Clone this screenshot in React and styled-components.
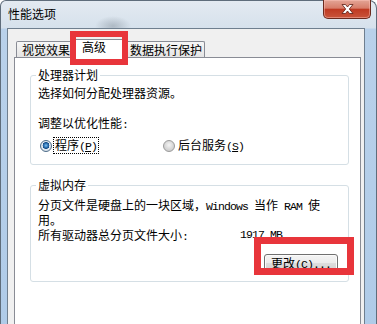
import styled, { createGlobalStyle } from "styled-components"

const GlobalStyle = createGlobalStyle`
    html, body {
        margin: 0;
        padding: 0;
        background: #ffffff;
        overflow: hidden;
    }
    body {
        font-family: "Noto Sans CJK SC", "Noto Sans", sans-serif;
        font-size: 12px;
        color: #000000;
    }
`

export default function App() {
    return (
        <>
            <GlobalStyle />
            <Window>
                <TitleBar>
                    <Title>性能选项</Title>
                    <CloseButton>
                        <svg width="13" height="10" viewBox="0 0 13 10">
                            <path
                                d="M1 0.5 H4.5 L6.5 3 L8.5 0.5 H12 L8.3 5 L12 9.5 H8.5 L6.5 7 L4.5 9.5 H1 L4.7 5 Z"
                                fill="#ffffff"
                                stroke="#5a1c12"
                                strokeWidth="0.8"
                                strokeLinejoin="round"
                            />
                        </svg>
                    </CloseButton>
                </TitleBar>
                <Frame>
                    <Client>
                        <TabRow>
                            <Tab $width={57} $padLeft={5} $first>视觉效果</Tab>
                            <Tab $width={55} $padLeft={10} $active>高级</Tab>
                            <Tab $width={81} $padLeft={5}>数据执行保护</Tab>
                        </TabRow>
                        <Panel>
                            <Group>
                                <Legend>处理器计划</Legend>
                                <GroupBody>
                                    <Line $top={6}>选择如何分配处理器资源。</Line>
                                    <Line $top={18}>调整以优化性能<Latin>:</Latin></Line>
                                    <RadioRow>
                                        <Option>
                                            <Radio $checked />
                                            <OptionText $focused>
                                                程序<Latin>(<u>P</u>)</Latin>
                                            </OptionText>
                                        </Option>
                                        <Option $offset={64}>
                                            <Radio />
                                            <OptionText>
                                                后台服务<Latin>(<u>S</u>)</Latin>
                                            </OptionText>
                                        </Option>
                                    </RadioRow>
                                </GroupBody>
                            </Group>
                            <Group $gap={14} $bottom={10}>
                                <Legend>虚拟内存</Legend>
                                <GroupBody>
                                    <Line $top={7} $height={13}>
                                        分页文件是硬盘上的一块区域，<Latin>Windows </Latin>当作<Latin> RAM </Latin>使
                                    </Line>
                                    <Line $top={0} $height={13}>用。</Line>
                                    <InfoRow>
                                        <InfoLabel>所有驱动器总分页文件大小<Latin>:</Latin></InfoLabel>
                                        <Latin>1917 MB</Latin>
                                    </InfoRow>
                                    <ButtonRow>
                                        <Button>
                                            更改<Latin>(<u>C</u>)...</Latin>
                                        </Button>
                                    </ButtonRow>
                                </GroupBody>
                            </Group>
                        </Panel>
                    </Client>
                </Frame>
                <Mark $left={69} $top={30} $width={58} $height={34} $border={6} />
                <Mark $left={253} $top={236} $width={100} $height={38} $border={7} />
            </Window>
        </>
    )
}

const Window = styled.div`
    position: relative;
    box-sizing: border-box;
    width: 377px;
    height: 340px;
    display: flex;
    flex-direction: column;
    border: 1px solid #5f6d7b;
    border-bottom: none;
    border-radius: 6px 8px 0 0;
    background:
        radial-gradient(ellipse 18px 10px at 112px 25px, rgba(80, 92, 104, 0.3), transparent),
        linear-gradient(to bottom, #e3eaf1 0px, #d6e1ec 27px, #b9d1ea 28px, #afcbe8 100%);
`

const TitleBar = styled.div`
    display: flex;
    align-items: flex-start;
    height: 27px;
    flex-shrink: 0;
`

const Title = styled.div`
    padding: 7px 0 0 7px;
    line-height: 12px;
`

const CloseButton = styled.div`
    box-sizing: border-box;
    width: 48px;
    height: 19px;
    margin: -1px 5px 0 auto;
    display: flex;
    align-items: center;
    justify-content: center;
    border: 1px solid #6b2a1e;
    border-top: none;
    border-radius: 0 0 5px 5px;
    background: linear-gradient(to bottom, #e3a596 0%, #d77d6a 45%, #bf3a22 52%, #c9553b 100%);
    box-shadow: inset 0 0 0 1px rgba(255, 200, 190, 0.45);
`

const Frame = styled.div`
    flex: 1;
    display: flex;
    padding: 0 11px 0 6px;
`

const Client = styled.div`
    flex: 1;
    display: flex;
    flex-direction: column;
    border: 1px solid #6f7f8f;
    border-bottom: none;
    background: #f0f0f0;
    padding: 10px 3px 0 6px;
`

const TabRow = styled.div`
    display: flex;
    align-items: flex-end;
    padding-left: 2px;
`

const Tab = styled.div`
    position: relative;
    z-index: ${(p) => (p.$active ? 1 : 0)};
    box-sizing: border-box;
    width: ${(p) => p.$width}px;
    height: ${(p) => (p.$active ? 19 : 16)}px;
    margin: 0 0 ${(p) => (p.$active ? -1 : 0)}px ${(p) => (p.$first ? 0 : -2)}px;
    padding-left: ${(p) => p.$padLeft}px;
    line-height: ${(p) => (p.$active ? 14 : 15)}px;
    white-space: nowrap;
    border: 1px solid #898c95;
    border-bottom: none;
    border-radius: 2px 2px 0 0;
    background: ${(p) => (p.$active ? "#ffffff" : "linear-gradient(to bottom, #f7f7f7, #e4e4e4)")};
`

const Panel = styled.div`
    flex: 1;
    background: #ffffff;
    border: 1px solid #898c95;
    padding: 11px 11px 0 15px;
`

const Group = styled.fieldset`
    box-sizing: border-box;
    width: 319px;
    min-width: 0;
    margin: ${(p) => p.$gap || 0}px 0 0;
    padding: 0 10px ${(p) => p.$bottom || 11}px 5px;
    border: 1px solid #d5dfe5;
    border-radius: 3px;
`

const Legend = styled.legend`
    padding: 0 2px;
    line-height: 12px;
    font-size: 12px;
`

const GroupBody = styled.div`
    padding-left: 2px;
`

const Line = styled.div`
    margin-top: ${(p) => p.$top}px;
    line-height: ${(p) => p.$height || 12}px;
    white-space: nowrap;
`

const Latin = styled.span`
    font-family: "Liberation Mono", "DejaVu Sans Mono", monospace;
    font-size: 11.5px;
    letter-spacing: -0.9px;
    white-space: pre;
`

const RadioRow = styled.div`
    display: flex;
    align-items: center;
    height: 15px;
    margin-top: 7px;
    padding-left: 2px;
`

const Option = styled.label`
    display: flex;
    align-items: center;
    margin-left: ${(p) => p.$offset || 0}px;
`

const Radio = styled.span`
    box-sizing: border-box;
    width: 12px;
    height: 12px;
    border-radius: 50%;
    border: 1px solid ${(p) => (p.$checked ? "#4d6c88" : "#9a9a9a")};
    background: ${(p) =>
        p.$checked
            ? "radial-gradient(circle at 50% 45%, #7ec0f0 0, #2266a8 2.4px, #1a4f84 3.2px, #e6eef5 3.6px, #c9d4de 100%)"
            : "radial-gradient(circle at 50% 40%, #f4f4f4 0, #d8d8d8 4px, #c4c4c4 100%)"};
`

const OptionText = styled.span`
    margin-left: 1px;
    padding: 0 1px;
    line-height: 13px;
    border: 1px ${(p) => (p.$focused ? "dotted #000000" : "solid transparent")};
`

const InfoRow = styled.div`
    display: flex;
    margin-top: 3px;
    line-height: 12px;
`

const InfoLabel = styled.span`
    width: 202px;
    white-space: nowrap;
`

const ButtonRow = styled.div`
    display: flex;
    justify-content: flex-end;
    margin-top: 11px;
`

const Button = styled.div`
    box-sizing: border-box;
    width: 74px;
    height: 17px;
    line-height: 15px;
    text-align: center;
    border: 1px solid #707070;
    border-radius: 3px;
    background: linear-gradient(to bottom, #f4f4f4 0%, #ececec 50%, #dedede 51%, #d2d2d2 100%);
    box-shadow: inset 0 0 0 1px #fbfbfb;
`

const Mark = styled.div`
    position: absolute;
    left: ${(p) => p.$left}px;
    top: ${(p) => p.$top}px;
    width: ${(p) => p.$width}px;
    height: ${(p) => p.$height}px;
    box-sizing: border-box;
    border: ${(p) => p.$border}px solid #e8353b;
    z-index: 2;
`
